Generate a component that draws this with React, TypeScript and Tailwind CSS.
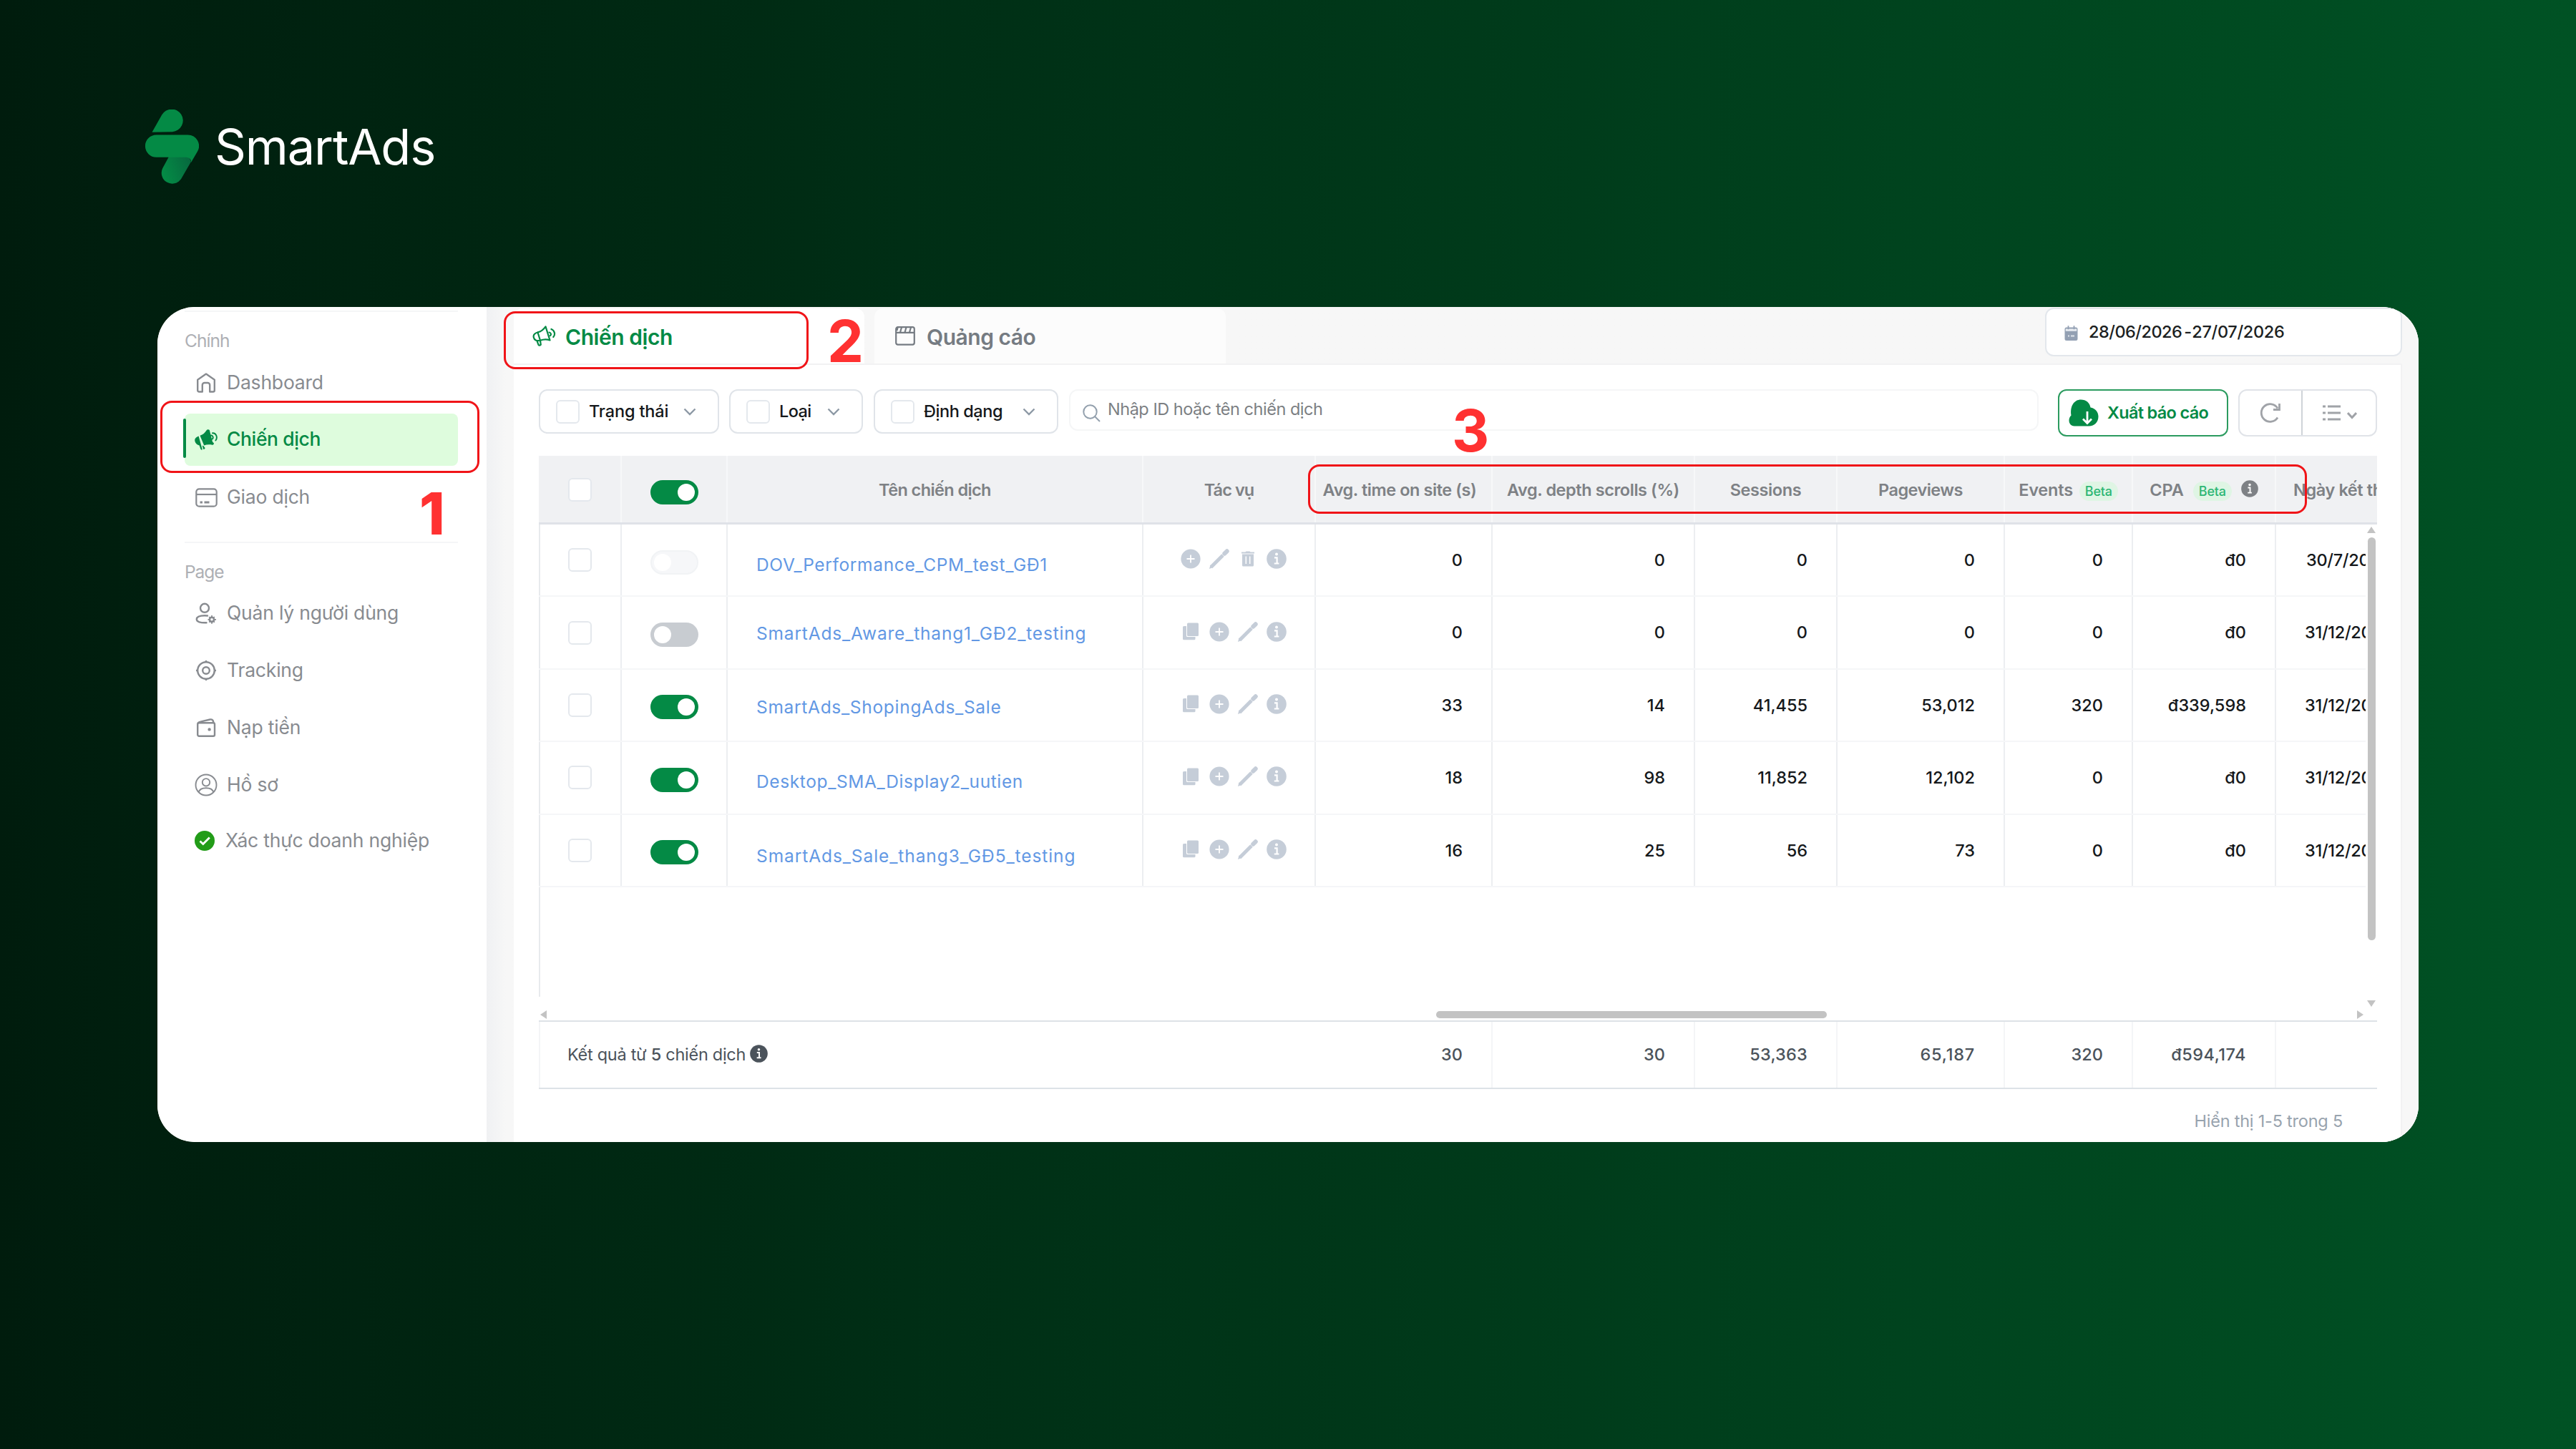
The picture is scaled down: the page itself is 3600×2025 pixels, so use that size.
import type { ReactNode } from "react";

type IconProps = { className?: string };

function Logo() {
  return (
    <svg viewBox="0 0 75 106" className="mt-px h-[106px] w-[75px]" fill="none">
      <defs>
        <linearGradient id="tail" x1="24" y1="86" x2="62" y2="72" gradientUnits="userSpaceOnUse">
          <stop offset="0" stopColor="#048a45" />
          <stop offset="1" stopColor="#076a3f" />
        </linearGradient>
      </defs>
      <path d="M9.5 31.7 23.2 7.6A15.8 15.8 0 1 1 38 31.2Z" fill="#048a45" />
      <path d="M33 66h28l3 7-14 24.300A15 15 0 0 1 24.300 82Z" fill="url(#tail)" />
      <path d="M15.500 35.500H59.500A15.500 15.500 0 0 1 72.800 59L64 74C64.500 69 61 66.700 56 66.700H15.500A15.600 15.600 0 0 1 15.500 35.500Z" fill="#048a45" />
    </svg>
  );
}

function HomeIcon() {
  return (
    <svg viewBox="0 0 28 28" className="h-7 w-7" fill="none" stroke="currentColor" strokeWidth="2.400" strokeLinejoin="round" strokeLinecap="round">
      <path d="M2.200 9.800 14 1.600l11.800 8.200V24.500a2 2 0 0 1-2 2h-4.600V17a3 3 0 0 0-3-3h-4.400a3 3 0 0 0-3 3v9.500H4.200a2 2 0 0 1-2-2Z" />
    </svg>
  );
}

function MegaphoneSolid() {
  return (
    <svg viewBox="0 0 32 29" className="h-[29px] w-8" fill="currentColor">
      <path d="M5.600 9.500 10.800 28.200C9.800 29 8.800 28.800 8.300 27.600L6.600 22.600C3 21.500.2 18.500.2 15 .2 12.500 2.500 10.500 5.600 9.500Z" />
      <path d="M7.500 8.800C11.500 7.600 14.500 4.800 16.500 1.500 17.500.2 19.500-.2 20.800 1l1 4 3.200 12.500L27 19.500c-.2 1.500-1 2.300-2.400 2.300-4-.8-8-.6-11.400.600Z" />
      <path d="M12 22.800 14.600 26c-.2 1.400-1.200 2-2.500 1.700L10.800 23Z" />
      <path d="M22.500 8.700c2.600-1.300 4.600 3.600 1.800 5M25 5.300c5-.600 7.600 6.300 4.400 10.200" fill="none" stroke="currentColor" strokeWidth="1.900" strokeLinecap="round" />
    </svg>
  );
}

function MegaphoneOutline() {
  return (
    <svg viewBox="0 0 33 29" className="h-[29px] w-[33px]" fill="none" stroke="currentColor" strokeWidth="2.200" strokeLinejoin="round" strokeLinecap="round">
      <path d="M8 9.300C12.500 8 16 5 18.500 1.300l6 19.200C20 18.800 15.500 19 11 20.800" />
      <path d="M8 9.300C3.500 10.500 1 13 1.800 16.500 2.500 20 6 22 11 20.800L7.500 9.500M6.500 21.300l2 5.500c.8 1.200 2.600 1 3.300-.2l-.8-5.500M23.500 9.500c2.600.4 3.200 3.200 1.300 4.700M26.500 5c4.600 1.800 6 7.500 2.800 11" />
    </svg>
  );
}

function CardIcon() {
  return (
    <svg viewBox="0 0 31 27" className="h-[27px] w-[31px]" fill="none" stroke="currentColor" strokeWidth="2.200">
      <rect x="1.300" y="1.300" width="28.400" height="24.400" rx="4" />
      <path d="M1.300 9h28.400" />
      <path d="M6.500 20h3.500M12.500 20h7" strokeWidth="2.800" />
    </svg>
  );
}

function UserCogIcon() {
  return (
    <svg viewBox="0 0 30 30" className="h-[30px] w-[30px]" fill="none" stroke="currentColor" strokeWidth="2.400">
      <circle cx="13" cy="7.800" r="6" />
      <path d="M15.500 28.200C7 28.500 1.800 27 1.800 23.500 1.800 20 6.500 18.200 13 18.200c1.500 0 2.800.1 4 .3" strokeLinecap="round" />
      <circle cx="23" cy="23.800" r="3.100" strokeWidth="2.600" />
      <path d="M23 18v2.500M23 27v2.700M17.500 23.800H20M26 23.800h3M19.200 20l1.700 1.700M25.100 25.900l1.800 1.800M26.900 20l-1.800 1.700M20.900 25.900l-1.700 1.800" strokeWidth="1.700" />
    </svg>
  );
}

function TrackingIcon() {
  return (
    <svg viewBox="0 0 28 28" className="h-7 w-7" fill="none" stroke="currentColor" strokeWidth="2.400">
      <circle cx="14" cy="14" r="11.800" />
      <circle cx="14" cy="14" r="4.800" />
      <path d="M14 0v3M14 25v3M0 14h3M25 14h3" />
    </svg>
  );
}

function WalletIcon() {
  return (
    <svg viewBox="0 0 28 26" className="h-[26px] w-7" fill="none" stroke="currentColor" strokeWidth="2.400" strokeLinejoin="round">
      <rect x="2.200" y="6.200" width="23.800" height="18.500" rx="2" />
      <path d="M2.500 7.200C3 5.500 4 5 6 4.600L19.500 1.500c2.500-.5 4 .5 4.500 2.600l.5 2.300" />
      <circle cx="18.600" cy="15.400" r="1" fill="currentColor" />
    </svg>
  );
}

function ProfileIcon() {
  return (
    <svg viewBox="0 0 32 32" className="h-8 w-8" fill="none" stroke="currentColor" strokeWidth="1.900">
      <circle cx="16" cy="16" r="14.500" />
      <circle cx="16" cy="12.300" r="5.200" />
      <path d="M5.600 26C7 21.500 11 20.200 16 20.200s9 1.300 10.400 5.800" />
    </svg>
  );
}

function VerifiedIcon() {
  return (
    <svg viewBox="0 0 28 28" className="h-7 w-7">
      <circle cx="14" cy="14" r="14" fill="#229c18" />
      <path d="m7.500 14.500 4.300 4L20.800 9.500" fill="none" stroke="#fff" strokeWidth="2.800" />
    </svg>
  );
}

function ClapperIcon() {
  return (
    <svg viewBox="0 0 28 27" className="h-[27px] w-7" fill="none" stroke="currentColor" strokeWidth="2.200">
      <rect x="1.200" y="1.200" width="25.600" height="24.400" rx="2.500" />
      <path d="M1.200 8.800h25.600M9 1.500 7 8.500M15.500 1.500l-2 7M22 1.500l-2 7M3.500 1.500 2.500 6" />
    </svg>
  );
}

function Chevron({ className }: IconProps) {
  return (
    <svg viewBox="0 0 18 11" className={className} fill="none" stroke="currentColor" strokeWidth="2.400">
      <path d="m1.500 1.500 7.500 7.500 7.500-7.500" />
    </svg>
  );
}

function SearchIcon() {
  return (
    <svg viewBox="0 0 25 25" className="mt-2 h-[25px] w-[25px] text-[#93a0ad]" fill="none" stroke="currentColor" strokeWidth="2">
      <circle cx="10.500" cy="10.500" r="9.200" />
      <path d="m17 17 7 7" />
    </svg>
  );
}

function CalendarIcon() {
  return (
    <svg viewBox="0 0 19 21" className="h-[21px] w-[19px]">
      <path d="M3 2.500h13A2.500 2.500 0 0 1 18.500 5v13.500A2.500 2.500 0 0 1 16 21H3A2.500 2.500 0 0 1 .5 18.500V5A2.500 2.500 0 0 1 3 2.500Z" fill="#93a0b3" />
      <path d="M1.800 4.500h15.400v3.200H1.800Z" fill="#e9edf2" />
      <path d="M5.500.2v5M13.500.2v5" stroke="#93a0b3" strokeWidth="1.800" />
      <path d="M5 14.500h2M9 14.500h5" stroke="#dfe5ec" strokeWidth="2" />
    </svg>
  );
}

function CloudDownload() {
  return (
    <svg viewBox="0 0 42 38" className="h-[38px] w-[42px]">
      <path d="M8 37.500C3 37.500.500 33.500.500 29.500c0-3 1-5 3-7C1.500 9 8 .500 17 .500c7.500 0 12.500 4.500 13.500 11C37 12.500 41.500 17.500 41.500 24c0 8-5.500 13.500-13 13.500Z" fill="#048a45" />
      <path d="M26 17v16M20 27.500l6 6 6-6" fill="none" stroke="#fff" strokeWidth="2.800" />
    </svg>
  );
}

function RefreshIcon() {
  return (
    <svg viewBox="0 0 30 30" className="h-[30px] w-[30px]" fill="none" stroke="currentColor" strokeWidth="2.800">
      <path d="M25 21.500A12.300 12.300 0 1 1 25 8.500" />
      <path d="M27.500 2v8.500H19" />
    </svg>
  );
}

function ListIcon() {
  return (
    <svg viewBox="0 0 26 24" className="h-6 w-[26px]" fill="none" stroke="currentColor" strokeWidth="2.800">
      <path d="M1 3h4M8 3h18M1 12h4M8 12h18M1 21h4M8 21h18" />
    </svg>
  );
}

function InfoIcon({ className }: IconProps) {
  return (
    <svg viewBox="0 0 28 28" className={className}>
      <circle cx="14" cy="14" r="13.800" fill="currentColor" />
      <circle cx="14" cy="7.500" r="2" fill="#fff" />
      <path d="M11 12.300h3.600v7.700M10.800 20.500h6.600" fill="none" stroke="#fff" strokeWidth="2.200" />
    </svg>
  );
}

function PlusIcon() {
  return (
    <svg viewBox="0 0 28 28" className="h-7 w-7">
      <circle cx="14" cy="14" r="13.600" fill="currentColor" />
      <path d="M14 8.500v11M8.500 14h11" stroke="#fff" strokeWidth="1.800" />
    </svg>
  );
}

function PencilIcon() {
  return (
    <svg viewBox="0 0 28 28" className="h-7 w-7" fill="none" stroke="currentColor">
      <path d="M2.500 25.500 19 9" strokeWidth="5" />
      <path d="M0 28l1.500-5.500L5 26Z" fill="currentColor" stroke="none" />
      <path d="M21.300 6.700 24.700 3.300" strokeWidth="6" strokeLinecap="round" />
    </svg>
  );
}

function TrashIcon() {
  return (
    <svg viewBox="0 0 20 22" className="h-[22px] w-5" fill="currentColor">
      <path d="M1 1.500h5.500L7.500.5h5l1 1H19v2H1ZM2 4.500h16V20a1.500 1.500 0 0 1-1.500 1.500h-13A1.500 1.500 0 0 1 2 20Z" />
      <path d="M7.300 7.500v10.500M12.700 7.500v10.500" stroke="#fff" strokeWidth="1.500" />
    </svg>
  );
}

function CopyIcon() {
  return (
    <svg viewBox="0 0 24 25" className="h-[25px] w-6" fill="currentColor">
      <path d="M8.500.5h13A1.500 1.500 0 0 1 23 2v15.500a1.500 1.500 0 0 1-1.500 1.500h-13A1.500 1.500 0 0 1 7 17.500V2A1.500 1.500 0 0 1 8.500.5Z" />
      <path d="M6 5v13.500a1.500 1.500 0 0 0 1.500 1.500h11v2.800a1.500 1.500 0 0 1-1.500 1.500H2.500A1.500 1.500 0 0 1 1 22.800V6.500A1.500 1.500 0 0 1 2.500 5Z" />
    </svg>
  );
}

function Checkbox() {
  return <span className="block h-[33px] w-[33px] shrink-0 rounded-md border-2 border-[#e4e8ed] bg-white" />;
}

function Toggle({ state }: { state: "on" | "off" | "disabled" }) {
  if (state === "on")
    return (
      <span className="flex h-[34px] w-[67px] items-center justify-end rounded-full bg-[#048a45] pr-[5px]">
        <span className="h-6 w-6 rounded-full bg-white" />
      </span>
    );
  if (state === "off")
    return (
      <span className="flex h-[34px] w-[67px] items-center rounded-full bg-[#c8ccd1] pl-[5px]">
        <span className="h-6 w-6 rounded-full bg-white" />
      </span>
    );
  return (
    <span className="flex h-[34px] w-[67px] items-center rounded-full border-2 border-[#f1f3f5] bg-[#f6f7f9] pl-[3px]">
      <span className="h-6 w-6 rounded-full bg-white" />
    </span>
  );
}

function NavItem({ icon, label, className = "" }: { icon: ReactNode; label: string; className?: string }) {
  return (
    <div className={`flex h-20 items-center gap-[13px] pt-[2px] pl-[14px] text-[26.5px] text-[#888b90] ${className}`}>
      <span className="flex w-8 shrink-0 justify-center">{icon}</span>
      <span className="whitespace-nowrap tracking-[-0.2px]">{label}</span>
    </div>
  );
}

function Sidebar() {
  return (
    <aside className="flex w-[460px] shrink-0 flex-col bg-white pr-10 pl-[38px]">
      <div className="mt-[5px] h-[2px] bg-[#f5f6f7]" />
      <div className="flex h-[58px] items-center pt-[23px] text-[24.5px] tracking-[-0.95px] text-[#aeb0b5]">Chính</div>
      <NavItem icon={<HomeIcon />} label="Dashboard" />
      <div className="relative flex h-20 items-center">
        <div className="flex h-[73px] w-full items-center gap-[13px] rounded-lg bg-[#defcdd] pl-[14px] text-[26.5px] font-medium text-[#048a45]">
          <MegaphoneSolid />
          <span className="tracking-[-0.39px]">Chiến dịch</span>
        </div>
        <span className="absolute top-[11px] left-[-2px] h-[55px] w-1 rounded-sm bg-[#048a45]" />
      </div>
      <NavItem icon={<CardIcon />} label="Giao dịch" />
      <div className="mt-[23px] h-[2px] bg-[#f5f6f7]" />
      <div className="flex h-[57px] items-center pt-6 text-[24.5px] tracking-[-1.1px] text-[#aeb0b5]">Page</div>
      <NavItem icon={<UserCogIcon />} label="Quản lý người dùng" />
      <NavItem icon={<TrackingIcon />} label="Tracking" />
      <NavItem icon={<WalletIcon />} label="Nạp tiền" />
      <NavItem icon={<ProfileIcon />} label="Hồ sơ" />
      <NavItem icon={<VerifiedIcon />} label="Xác thực doanh nghiệp" className="mt-[-2px] ml-[-2px]" />
    </aside>
  );
}

function Filter({ label, className }: { label: string; className: string }) {
  return (
    <div className={`flex h-[62px] shrink-0 items-center rounded-xl border-2 border-[#e0e4e9] pl-[22px] text-[23.5px] font-medium text-[#15181b] ${className}`}>
      <Checkbox />
      <span className="ml-[13px] flex-1 whitespace-nowrap">{label}</span>
      <Chevron className="h-[11px] w-[18px] text-[#8d99a5]" />
    </div>
  );
}

function Toolbar() {
  return (
    <div className="flex h-[93px] shrink-0 items-start">
      <Filter label="Trạng thái" className="w-[252px] pr-[30px] tracking-[-0.15px]" />
      <Filter label="Loại" className="ml-[14px] w-[187px] pr-[30px] tracking-[-0.6px]" />
      <Filter label="Định dạng" className="ml-[15px] w-[258px] pr-[30px] tracking-[-0.43px]" />
      <div className="ml-[15px] flex h-[58px] w-[1355px] items-center gap-[10px] rounded-xl border-2 border-[#f5f6f7] pl-[17px]">
        <SearchIcon />
        <span className="pb-[2px] text-[23.5px] tracking-[-0.48px] text-[#7c7f83]">Nhập ID hoặc tên chiến dịch</span>
      </div>
      <div className="ml-[27px] flex h-[66px] w-[238px] items-center gap-3 rounded-xl border-[2.500px] border-[#2b9b5f] pl-[13px]">
        <CloudDownload />
        <span className="text-[23.5px] font-semibold tracking-[-0.69px] whitespace-nowrap text-[#048a45]">Xuất báo cáo</span>
      </div>
      <div className="ml-[14px] flex h-[66px] w-[194px] rounded-xl border-2 border-[#e0e3e8] text-[#a0a3a8]">
        <div className="flex w-[88px] items-center justify-center border-r-2 border-[#cfd3d8]">
          <RefreshIcon />
        </div>
        <div className="flex flex-1 items-center justify-center gap-[9px]">
          <ListIcon />
          <svg viewBox="0 0 14 12" className="mt-2 h-3 w-[14px]" fill="none" stroke="currentColor" strokeWidth="3">
            <path d="m1 2 6 6.500L13 2" />
          </svg>
        </div>
      </div>
    </div>
  );
}

const columns = "grid grid-cols-[116px_148px_581px_241px_247px_283px_199px_234px_179px_200px_1fr]";

function Th({ children, className = "" }: { children?: ReactNode; className?: string }) {
  return <div className={`flex items-center justify-center overflow-hidden border-r-2 border-[#f7f8f9] whitespace-nowrap ${className}`}>{children}</div>;
}

function Beta() {
  return (
    <span className="flex h-[27px] w-[54px] items-center justify-center rounded-full bg-[#dff5e4] text-[18px] font-medium tracking-[-0.2px] text-[#2cb674]">Beta</span>
  );
}

function TableHead() {
  return (
    <div className={`${columns} h-24 shrink-0 border-b-[3px] border-[#dfe2e8] bg-[#f0f1f3] text-[23.5px] font-semibold text-[#7e8185]`}>
      <Th className="pt-[2px]"><Checkbox /></Th>
      <Th className="pt-[9px]"><Toggle state="on" /></Th>
      <Th className="pt-[2px] tracking-[-0.6px]">Tên chiến dịch</Th>
      <Th className="pt-[2px] tracking-[-0.9px]">Tác vụ</Th>
      <Th className="pt-[2px] pr-[11px] tracking-[-0.43px]">Avg. time on site (s)</Th>
      <Th className="pt-[2px] tracking-[-0.43px]">Avg. depth scrolls (%)</Th>
      <Th className="pt-[2px] tracking-[-0.4px]">Sessions</Th>
      <Th className="pt-[2px] tracking-[-0.54px]">Pageviews</Th>
      <Th className="gap-[9px] pt-[2px] tracking-[-0.19px]">Events <span className="pt-[3px]"><Beta /></span></Th>
      <Th className="gap-[13px] pt-[2px]">CPA <span className="pt-[3px]"><Beta /></span><InfoIcon className="mb-1 h-6 w-6" /></Th>
      <div className="flex items-center overflow-hidden pt-[2px] pl-6 tracking-[-0.4px] whitespace-nowrap">Ngày kết thúc</div>
    </div>
  );
}

type Row = {
  name: string;
  nameClass: string;
  toggle: "on" | "off" | "disabled";
  values: string[];
  end: string;
  first?: boolean;
};

const rows: Row[] = [
  { name: "DOV_Performance_CPM_test_GĐ1", nameClass: "pt-[14px] tracking-[0.65px]", toggle: "disabled", values: ["0", "0", "0", "0", "0", "đ0"], end: "30/7/2026", first: true },
  { name: "SmartAds_Aware_thang1_GĐ2_testing", nameClass: "pt-[3px] tracking-[0.82px]", toggle: "off", values: ["0", "0", "0", "0", "0", "đ0"], end: "31/12/2026" },
  { name: "SmartAds_ShopingAds_Sale", nameClass: "pt-[6px] tracking-[0.7px]", toggle: "on", values: ["33", "14", "41,455", "53,012", "320", "đ339,598"], end: "31/12/2026" },
  { name: "Desktop_SMA_Display2_uutien", nameClass: "pt-[12px] tracking-[0.62px]", toggle: "on", values: ["18", "98", "11,852", "12,102", "0", "đ0"], end: "31/12/2026" },
  { name: "SmartAds_Sale_thang3_GĐ5_testing", nameClass: "pt-[17px] tracking-[0.92px]", toggle: "on", values: ["16", "25", "56", "73", "0", "đ0"], end: "31/12/2026" },
];

function TableRow({ row }: { row: Row }) {
  return (
    <div className={`${columns} h-[101.400px] border-b-2 border-[#f5f6f8] text-[23.5px] font-[450] text-[#15181b]`}>
      <div className="flex items-center justify-center border-r-2 border-[#eceef1]"><Checkbox /></div>
      <div className="flex items-center justify-center border-r-2 border-[#eceef1] pt-[6px]"><Toggle state={row.toggle} /></div>
      <div className="flex items-center border-r-2 border-[#eceef1] pl-10">
        <span className={`text-[24.5px] font-normal whitespace-nowrap text-[#6298e4] ${row.nameClass}`}>{row.name}</span>
      </div>
      <div className="flex items-center justify-center border-r-2 border-[#eceef1] pb-[3px] pl-[13px] text-[#c5cdd8]">
        <span className="flex w-10 justify-center">{row.first ? <PlusIcon /> : <CopyIcon />}</span>
        <span className="flex w-10 justify-center">{row.first ? <PencilIcon /> : <PlusIcon />}</span>
        <span className="flex w-10 items-center justify-center">{row.first ? <TrashIcon /> : <PencilIcon />}</span>
        <span className="flex w-10 justify-center"><InfoIcon className="h-7 w-7" /></span>
      </div>
      {row.values.map((v, i) => (
        <div key={i} className="flex items-center justify-end border-r-2 border-[#eceef1] pr-10">{v}</div>
      ))}
      <div className={`flex items-center overflow-hidden tracking-[-0.3px] ${row.first ? "pl-[42px]" : "pl-10"}`}>{row.end}</div>
    </div>
  );
}

function TableBody() {
  return (
    <div className="relative h-[693px] shrink-0">
      <div className="h-[660px] w-[2553px] border-l-2 border-[#e8eaed]">
        <div className="-ml-[2px]">
          {rows.map((r) => (
            <TableRow key={r.name} row={r} />
          ))}
        </div>
      </div>
      <div className="absolute top-[3px] right-px flex h-[671px] w-[14px] flex-col items-center text-[#c3c3c3]">
        <svg viewBox="0 0 12 9" className="h-[9px] w-3" fill="currentColor"><path d="M6 0 12 9H0Z" /></svg>
        <div className="mt-[6px] h-[563px] w-[11px] rounded-full bg-[#c3c3c3]" />
        <svg viewBox="0 0 12 9" className="mt-auto h-[9px] w-3" fill="currentColor"><path d="M0 0h12L6 9Z" /></svg>
      </div>
      <div className="absolute bottom-[2px] left-[2px] flex h-3 w-[2548px] items-center text-[#c3c3c3]">
        <svg viewBox="0 0 9 12" className="h-3 w-[9px]" fill="currentColor"><path d="M9 0v12L0 6Z" /></svg>
        <div className="ml-[1243px] h-[10px] w-[546px] rounded-full bg-[#c3c3c3]" />
        <svg viewBox="0 0 9 12" className="ml-auto h-3 w-[9px]" fill="currentColor"><path d="M0 0v12l9-6Z" /></svg>
      </div>
    </div>
  );
}

const totals = [
  { v: "30", c: "" },
  { v: "30", c: "" },
  { v: "53,363", c: "tracking-[0.2px]" },
  { v: "65,187", c: "tracking-[0.8px]" },
  { v: "320", c: "" },
  { v: "đ594,174", c: "tracking-[0.5px]" },
];

function TableFoot() {
  return (
    <div className="grid h-24 shrink-0 grid-cols-[1086px_247px_283px_199px_234px_179px_200px_1fr] border-y-2 border-[#dde2e7] text-[23.5px] font-medium text-[#4b535b]">
      <div className="flex items-center border-l-2 border-[#f4f5f7] pl-[38px]">
        <span className="font-normal tracking-[-0.28px] whitespace-nowrap">
          Kết quả từ <span className="font-medium">5</span> chiến dịch
        </span>
        <InfoIcon className="mb-1 ml-[6px] h-[25px] w-[25px]" />
      </div>
      {totals.map((t, i) => (
        <div key={i} className={`flex items-center justify-end border-r-2 border-[#f4f5f7] pr-10 ${t.c}`}>{t.v}</div>
      ))}
      <div />
    </div>
  );
}

function Main() {
  return (
    <main className="flex flex-1 flex-col bg-[#f7f7f7] bg-linear-to-r from-[#f0f1f3] from-0% to-[#f7f7f7] to-[1%] pr-[23px] pl-[38px]">
      <div className="flex h-[81px] shrink-0 border-b-2 border-[#f2f2f3]">
        <div className="mt-[2px] flex w-[490px] items-center gap-[13px] rounded-t-xl bg-white pl-[26px] text-[30px] font-semibold text-[#048a45]">
          <MegaphoneOutline />
          <span className="pt-[3px] tracking-[-0.45px]">Chiến dịch</span>
        </div>
        <div className="mt-[2px] ml-[14px] flex w-[491px] items-center gap-4 rounded-t-xl bg-[#fcfcfc] pl-[29px] text-[30px] font-semibold text-[#757b82]">
          <ClapperIcon />
          <span className="pt-[3px] tracking-[-0.49px]">Quảng cáo</span>
        </div>
        <div className="mt-px ml-auto flex h-[68px] w-[499px] items-center rounded-xl border-2 border-[#e3e7ec] bg-white pl-[25px] text-[23.5px] font-medium text-[#1c1f22]">
          <span className="pt-[2px]"><CalendarIcon /></span>
          <span className="ml-[15px] tracking-[-0.52px]">28/06/2026</span>
          <span className="mx-[3px] w-[7px] text-center leading-none tracking-[-2px]">-</span>
          <span className="ml-[1px] tracking-[-0.33px]">27/07/2026</span>
        </div>
      </div>
      <section className="flex flex-1 flex-col border-r-2 border-[#f2f2f3] bg-white pt-[34px] pr-[33px] pl-[35px]">
        <Toolbar />
        <TableHead />
        <TableBody />
        <TableFoot />
        <div className="flex h-[86px] justify-end pt-[31px] pr-12 text-[23.5px] leading-[28px] tracking-[-0.22px] text-[#98a3ae]">Hiển thị 1-5 trong 5</div>
      </section>
    </main>
  );
}

export default function App() {
  return (
    <div className="relative flex h-[2025px] w-[3600px] flex-col overflow-hidden bg-linear-to-r from-[#001c0d] to-[#005224] font-['Inter',sans-serif]">
      <header className="flex h-[429px] shrink-0 items-start pt-[152px] pl-[203px]">
        <Logo />
        <span className="ml-[22px] pt-3 text-[68.5px] leading-[84px] tracking-[-1.1px] text-white">SmartAds</span>
      </header>
      <div className="ml-[220px] flex h-[1167px] w-[3160px] shrink-0 overflow-hidden rounded-[52px] bg-white">
        <Sidebar />
        <Main />
      </div>

      <div className="absolute top-[560px] left-[224px] h-[101px] w-[446px] rounded-2xl border-[3.500px] border-[#f01418]" />
      <div className="absolute top-[435px] left-[704px] h-[81px] w-[426px] rounded-2xl border-[3.500px] border-[#f01418]" />
      <div className="absolute top-[649px] left-[1828px] h-[69px] w-[1396px] rounded-2xl border-[3.500px] border-[#f01418]" />
      <span className="absolute top-[678px] left-[586px] text-[81px] leading-[81px] font-extrabold text-[#ff3131]">1</span>
      <span className="absolute top-[437px] left-[1156px] text-[81px] leading-[81px] font-bold text-[#ff3131]">2</span>
      <span className="absolute top-[562px] left-[2029px] text-[81px] leading-[81px] font-bold text-[#ff3131]">3</span>
    </div>
  );
}
